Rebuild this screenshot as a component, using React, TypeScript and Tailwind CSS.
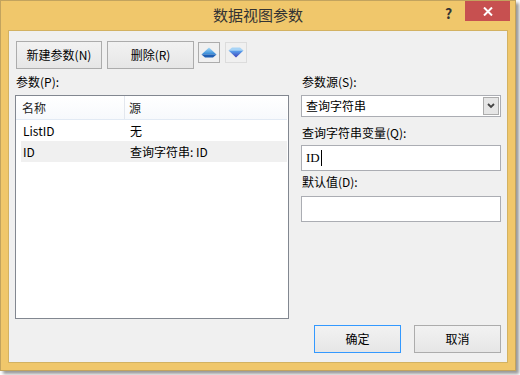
import React from "react";

const cjk = { fontFamily: '"Noto Sans CJK SC", "Noto Sans", sans-serif' };

function Btn({ label, className = "" }: { label: string; className?: string }) {
  return (
    <button
      className={`h-[28px] flex items-center justify-center border border-[#ACACAC] bg-gradient-to-b from-[#F2F2F2] to-[#E6E6E6] text-[12px] leading-[16px] text-black ${className}`}
    >
      {label}
    </button>
  );
}

function UpArrow() {
  return (
    <svg width="16" height="11" viewBox="0 0 16 11">
      <defs>
        <linearGradient id="up" x1="0" y1="0" x2="0" y2="1">
          <stop offset="0" stopColor="#A6DBF8" />
          <stop offset="1" stopColor="#2F86D6" />
        </linearGradient>
      </defs>
      <polygon points="8,0.5 15.5,7.5 0.5,7.5" fill="url(#up)" />
      <polygon points="0.5,7.5 15.5,7.5 12,10.5 4,10.5" fill="#1F5FB4" />
    </svg>
  );
}

function DownArrow() {
  return (
    <svg width="16" height="11" viewBox="0 0 16 11">
      <defs>
        <linearGradient id="dn" x1="0" y1="0" x2="0" y2="1">
          <stop offset="0" stopColor="#5AA6F0" />
          <stop offset="1" stopColor="#3E40B8" />
        </linearGradient>
      </defs>
      <polygon points="4,0.5 12,0.5 15.5,3.5 0.5,3.5" fill="#A8D4F6" />
      <polygon points="0.5,3.5 15.5,3.5 8,10.5" fill="url(#dn)" />
    </svg>
  );
}

export default function App() {
  return (
    <div className="w-[520px] h-[375px] bg-white" style={cjk}>
      <div className="w-[516px] h-[371px] border border-[#C2A35E] bg-[#F0C76B] flex flex-col shadow-[3px_3px_3px_rgba(0,0,0,0.4)]">
        {/* title bar */}
        <div className="relative h-[29px] flex items-center justify-center">
          <span className="text-[15px] leading-[20px] text-[#333] mt-[-1px]">数据视图参数</span>
          <span className="absolute left-[444px] top-[4px] text-[14px] leading-[16px] font-bold text-[#333]">?</span>
          <div className="absolute right-[5px] top-0 w-[45px] h-[20px] bg-[#C75050] flex items-center justify-center">
            <svg width="10" height="9" viewBox="0 0 10 9">
              <path d="M1 0.5 L9 8.5 M9 0.5 L1 8.5" stroke="white" strokeWidth="2" />
            </svg>
          </div>
        </div>

        {/* content */}
        <div className="mx-[7px] h-[333px] border border-[#D3B262] bg-[#F0F0F0] pt-[10px] px-[6px] flex flex-col">
          {/* toolbar */}
          <div className="flex items-start ml-px">
            <Btn label="新建参数(N)" className="w-[86px]" />
            <Btn label="删除(R)" className="w-[87px] ml-[5px]" />
            <div className="ml-[4px] mt-px w-[22px] h-[21px] border border-[#ACACAC] flex items-center justify-center">
              <UpArrow />
            </div>
            <div className="ml-[5px] mt-px w-[22px] h-[21px] border border-[#DCDCDC] flex items-center justify-center">
              <DownArrow />
            </div>
          </div>

          <div className="flex">
            {/* left column */}
            <div className="w-[274px] flex flex-col">
              <div className="h-[26px] flex items-center pl-px text-[12px] text-black">参数(P):</div>
              <div className="h-[224px] border border-[#828790] bg-white flex flex-col">
                <div className="h-[24px] flex border-b border-[#E2EAF4] bg-gradient-to-b from-white to-[#F7F9FC] mr-px text-[12px] text-[#1E1E1E]">
                  <div className="w-[109px] flex items-center pl-[6px] border-r border-[#E3E7EE]">名称</div>
                  <div className="flex-1 flex items-center pl-[4px]">源</div>
                </div>
                <div className="mx-[5px] mr-px flex flex-col text-[12px] text-black">
                  <div className="h-[21px] flex items-center">
                    <span className="w-[109px] pl-[2px]">ListID</span>
                    <span>无</span>
                  </div>
                  <div className="h-[21px] flex items-center bg-[#F0F0F0]">
                    <span className="w-[109px] pl-[2px]">ID</span>
                    <span>查询字符串: ID</span>
                  </div>
                </div>
              </div>
            </div>

            {/* right column */}
            <div className="ml-[12px] w-[200px] flex flex-col text-[12px] text-black">
              <div className="h-[26px] flex items-center pl-px">参数源(S):</div>
              <div className="h-[22px] border border-[#ABADB3] bg-white flex items-center">
                <span className="flex-1 pl-[4px] leading-[16px]">查询字符串</span>
                <div className="w-[16px] h-[18px] mr-px border border-[#ACACAC] bg-[#E6E6E6] flex items-center justify-center">
                  <svg width="8" height="6" viewBox="0 0 8 6">
                    <path d="M1 1 L4 4 L7 1" stroke="#444" strokeWidth="1.8" fill="none" />
                  </svg>
                </div>
              </div>
              <div className="h-[28px] pt-[8px] leading-[16px] pl-px">查询字符串变量(Q):</div>
              <div className="h-[26px] border border-[#ABADB3] bg-white flex items-center pl-[4px]">
                <span className="text-[13px] leading-[16px]" style={{ fontFamily: '"Liberation Serif", serif' }}>ID</span>
                <span className="w-px h-[16px] bg-black ml-px" />
              </div>
              <div className="h-[25px] pt-[3px] leading-[16px] pl-px">默认值(D):</div>
              <div className="h-[26px] border border-[#ABADB3] bg-white" />
            </div>
          </div>

          {/* bottom buttons */}
          <div className="mt-[6px] flex justify-end gap-[13px]">
            <Btn label="确定" className="w-[87px] !border-[#3399FF]" />
            <Btn label="取消" className="w-[87px]" />
          </div>
        </div>
      </div>
    </div>
  );
}
